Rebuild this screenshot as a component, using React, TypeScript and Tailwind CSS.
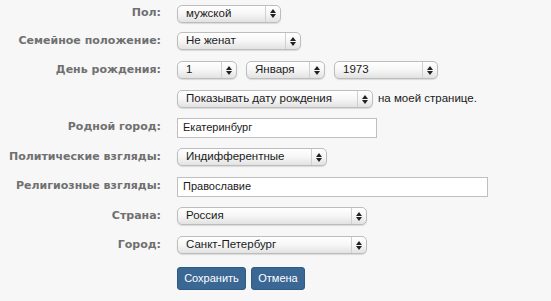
const labelCls =
  "w-[161px] shrink-0 text-right font-['DejaVu_Sans',sans-serif] text-[11px] font-bold text-[#707070]"

interface ISelectProps {
  value: string
  width: string
}

const Select = ({ value, width }: ISelectProps) => (
  <div
    className={`${width} flex h-[18px] items-stretch rounded-[5px] border border-[#bdbdbd] bg-gradient-to-b from-white via-[#f6f6f6] to-[#e2e2e2] shadow-[0_1px_1px_rgba(0,0,0,0.12)]`}
  >
    <span className="flex flex-1 items-center truncate pl-[8px] text-[11.5px] leading-none text-[#1a1a1a]">
      {value}
    </span>
    <span className="flex w-[15px] flex-col items-center justify-center gap-[1px] border-l border-[#d0d0d0]">
      <svg width="6" height="4" viewBox="0 0 6 4">
        <path d="M3 0 L6 4 L0 4 Z" fill="#222" />
      </svg>
      <svg width="6" height="4" viewBox="0 0 6 4">
        <path d="M0 0 L6 0 L3 4 Z" fill="#222" />
      </svg>
    </span>
  </div>
)

interface IInputProps {
  value: string
  width: string
}

const Input = ({ value, width }: IInputProps) => (
  <div
    className={`${width} flex h-[20px] items-center border border-[#bfbfbf] bg-white pl-[5px] text-[11px] text-[#1a1a1a]`}
  >
    {value}
  </div>
)

interface IRowProps {
  label?: string
  height: string
  children: React.ReactNode
}

const Row = ({ label, height, children }: IRowProps) => (
  <div className={`flex items-center gap-[16px] ${height}`}>
    <div className={labelCls}>{label}</div>
    <div className="flex items-center">{children}</div>
  </div>
)

const App = () => {
  return (
    <div className="h-[301px] w-[551px] overflow-hidden bg-[#f7f7f7] font-['Liberation_Sans',Arial,sans-serif]">
      <Row label="Пол:" height="h-[27px]">
        <Select value="мужской" width="w-[104px]" />
      </Row>
      <Row label="Семейное положение:" height="h-[28px]">
        <Select value="Не женат" width="w-[124px]" />
      </Row>
      <Row label="День рождения:" height="h-[30px]">
        <div className="flex gap-[9px]">
          <Select value="1" width="w-[60px]" />
          <Select value="Января" width="w-[79px]" />
          <Select value="1973" width="w-[104px]" />
        </div>
      </Row>
      <Row height="h-[28px]">
        <Select value="Показывать дату рождения" width="w-[196px]" />
        <span className="ml-[5px] text-[11.5px] text-[#1a1a1a]">на моей странице.</span>
      </Row>
      <Row label="Родной город:" height="h-[29px]">
        <Input value="Екатеринбург" width="w-[200px]" />
      </Row>
      <Row label="Политические взгляды:" height="h-[30px]">
        <Select value="Индифферентные" width="w-[150px]" />
      </Row>
      <Row label="Религиозные взгляды:" height="h-[29px]">
        <Input value="Православие" width="w-[311px]" />
      </Row>
      <Row label="Страна:" height="h-[30px]">
        <Select value="Россия" width="w-[190px]" />
      </Row>
      <Row label="Город:" height="h-[28px]">
        <Select value="Санкт-Петербург" width="w-[190px]" />
      </Row>
      <div className="mt-[8px] flex gap-[5px] pl-[177px]">
        <button className="h-[23px] w-[69px] rounded-[3px] border border-[#2f5a84] bg-[#3a6793] text-[11px] text-white">
          Сохранить
        </button>
        <button className="h-[23px] w-[54px] rounded-[3px] border border-[#2f5a84] bg-[#3a6793] text-[11px] text-white">
          Отмена
        </button>
      </div>
    </div>
  )
}

export default App
